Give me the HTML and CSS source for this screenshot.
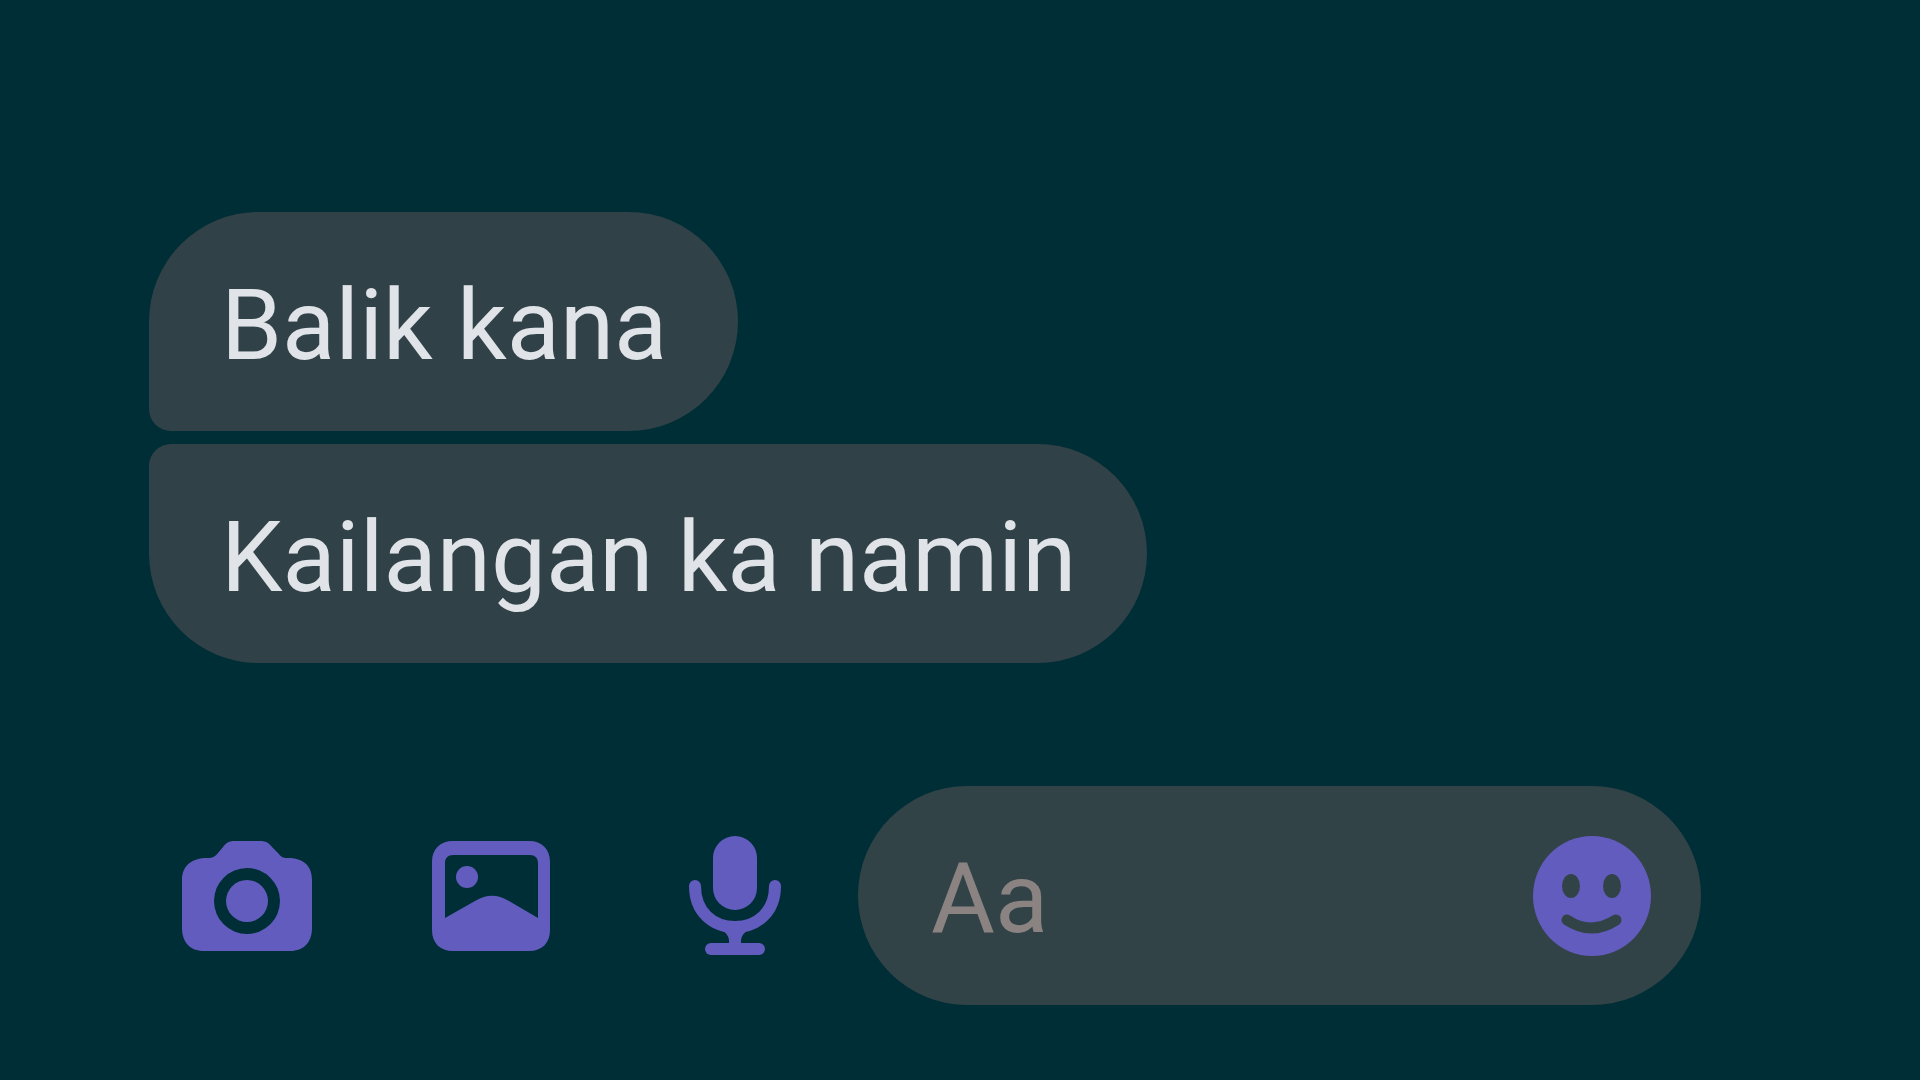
FILE: index.html
```html
<!DOCTYPE html>
<html lang="tl">
<head>
  <meta charset="UTF-8">
  <meta name="viewport" content="width=device-width, initial-scale=1.0">
  <title>Chat</title>
  <link rel="stylesheet" href="styles.css">
</head>
<body>

  <main class="chat">
    <div class="messages">
      <p class="bubble first">Balik kana</p>
      <p class="bubble last">Kailangan ka namin</p>
    </div>

    <form class="composer">
      <div class="actions">
        <button type="button" aria-label="Camera">
          <svg width="130" height="110" viewBox="0 0 130 110">
            <path fill-rule="evenodd" d="M52 0H78C84 0 87 2 90 6L96 12C99 16 101 17 105 17C122 17 130 25 130 39V87C130 101 122 110 108 110H22C8 110 0 101 0 87V39C0 25 9 17 26 17C30 17 33 16 36 12L41 6C44 2 47 0 52 0ZM65 27A33 33 0 1 0 65 93A33 33 0 1 0 65 27Z"/>
            <circle cx="65" cy="60" r="21"/>
          </svg>
        </button>
        <button type="button" aria-label="Gallery">
          <svg width="118" height="110" viewBox="0 0 118 110">
            <path fill-rule="evenodd" d="M21 0H97C110 0 118 8 118 21V89C118 102 110 110 97 110H21C8 110 0 102 0 89V21C0 8 8 0 21 0ZM21 14C16 14 13 17 13 22V77L43 60C55 53 65 53 77 60L106 77V22C106 17 103 14 98 14Z"/>
            <circle cx="35" cy="36" r="11"/>
          </svg>
        </button>
        <button type="button" aria-label="Voice message">
          <svg width="92" height="120" viewBox="0 0 92 120">
            <rect x="24" y="0" width="44" height="74" rx="22"/>
            <path class="line" d="M6 50C6 76 24 91 46 91C68 91 86 76 86 50M46 91V112"/>
            <path d="M32 94Q39 97 40 104H52Q53 97 60 94Z"/>
            <path class="line" d="M22 113H70"/>
          </svg>
        </button>
      </div>

      <div class="field">
        <input type="text" placeholder="Aa" aria-label="Message">
        <button type="button" aria-label="Emoji">
          <svg width="118" height="120" viewBox="0 0 118 120">
            <ellipse cx="59" cy="60" rx="59" ry="60"/>
            <ellipse class="hole" cx="38" cy="50" rx="9" ry="12"/>
            <ellipse class="hole" cx="79" cy="50" rx="9" ry="12"/>
            <path class="smile" d="M34 84Q58 100 83 84"/>
          </svg>
        </button>
      </div>
    </form>
  </main>

</body>
</html>
```

FILE: styles.css
```css
* {
  box-sizing: border-box;
}
body {
  margin: 0;
  background: #002e36;
  font-family: Roboto, sans-serif;
  font-size: 98px;
}
.chat {
  min-height: 100vh;
  padding: 212px 219px 75px 149px;
}
/* Messages */
.messages {
  display: flex;
  flex-direction: column;
  align-items: flex-start;
  gap: 13px;
}
.bubble {
  margin: 0;
  padding: 56px 71px 47px 72px;
  line-height: 116px;
  border-radius: 110px;
  background: #304147;
  color: #e0e4e8;
}
.first {
  border-bottom-left-radius: 22px;
}
.last {
  border-top-left-radius: 22px;
}
/* Bottom bar */
.composer {
  display: flex;
  align-items: center;
  gap: 58px;
  margin-top: 123px;
}
.actions {
  display: flex;
  align-items: center;
  gap: 114px;
  padding-left: 33px;
}
button {
  padding: 0;
  border: none;
  background: none;
  cursor: pointer;
}
.actions button {
  width: 130px;
}
svg {
  display: block;
  margin: 0 auto;
  fill: #625cbe;
}
.line {
  fill: none;
  stroke: #625cbe;
  stroke-width: 12;
  stroke-linecap: round;
}
.field {
  display: flex;
  align-items: center;
  flex: 1;
  min-width: 0;
  padding: 0 50px 0 73px;
  border-radius: 110px;
  background: #324348;
}
.field input {
  flex: 1;
  min-width: 0;
  height: 219px;
  padding: 6px 0 0;
  border: none;
  outline: none;
  background: none;
  color: #e0e4e8;
  font: inherit;
}
.field input::placeholder {
  color: #8b8382;
  opacity: 1;
}
.hole {
  fill: #324348;
}
.smile {
  fill: none;
  stroke: #324348;
  stroke-width: 11;
  stroke-linecap: round;
}
```
